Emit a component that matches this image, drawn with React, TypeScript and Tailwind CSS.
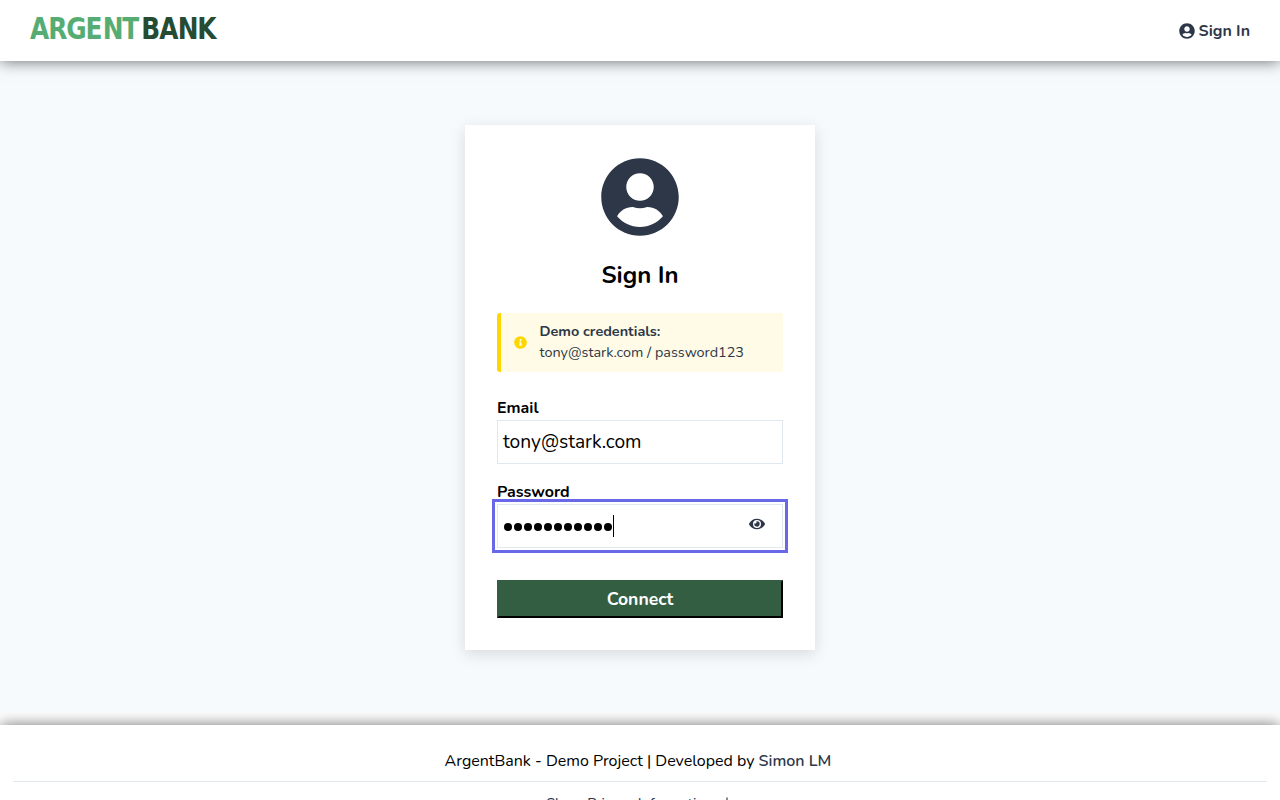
import { FaUserCircle, FaInfoCircle, FaEye } from "react-icons/fa";
import { ArrowDown } from "lucide-react";

export default function App() {
  return (
    <div className="flex h-[800px] flex-col overflow-hidden bg-white font-['Nunito','Noto_Sans',sans-serif] text-black">
      <header className="relative z-20 flex h-[61px] shrink-0 items-center justify-between bg-white px-[30px] shadow-[0_0_15px_rgba(0,0,0,0.6)]">
        <svg width="190" height="28" viewBox="0 0 190 28" className="-mt-[5px]" role="img" aria-label="Argent Bank">
          <text
            transform="scale(0.84 1)"
            y="24.5"
            x="0 21.6 43.2 66 86.6 109.8 132.4 154 175.8 199"
            fontFamily="DejaVu Sans"
            fontWeight="700"
            fontSize="29.6"
            fill="#56ad73"
          >
            ARGENT<tspan fill="#254c33">BANK</tspan>
          </text>
        </svg>
        <a className="flex items-center gap-1 text-base font-bold text-[#2d3748]">
          <FaUserCircle />
          <span>Sign In</span>
        </a>
      </header>

      <main className="relative z-10 flex h-[652px] shrink-0 flex-col items-center bg-[#f6fafd] pt-16">
        <section className="flex h-[525px] w-[350px] flex-col items-center bg-white p-8 shadow-[0_4px_15px_rgba(0,0,0,0.13)]">
          <FaUserCircle className="size-20 text-[#2d3748]" />
          <h1 className="mt-[22px] text-[24px] leading-8 font-bold">Sign In</h1>
          <div className="mt-[22px] flex h-[59px] w-full items-center rounded-[3px] border-l-4 border-[#ffd700] bg-[#fffbe6] pl-[13px] text-[#2d3748]">
            <FaInfoCircle className="size-[13px] text-[#ffd700]" />
            <p className="mb-[2px] ml-[12.5px] text-[14.4px] leading-[21px]">
              <strong className="block">Demo credentials:</strong>
              <span className="block">tony@stark.com / password123</span>
            </p>
          </div>
          <label className="mt-6 h-6 w-full text-base leading-6 font-bold">Email</label>
          <div className="flex h-11 w-full items-center border border-[#e2e8f0] px-[5px] text-[19.2px]">
            <span>tony@stark.com</span>
          </div>
          <label className="mt-4 h-6 w-full text-base leading-6 font-bold">Password</label>
          <div className="flex h-11 w-full items-center border border-[#e2e8f0] pr-[17px] pl-[6px] outline-3 outline-offset-2 outline-[#6868e8]">
            <div className="mt-px flex gap-[2px]">
              {Array.from({ length: 11 }, (_, i) => (
                <span key={i} className="size-2 rounded-full bg-black" />
              ))}
            </div>
            <span className="ml-px h-[22px] w-px bg-black" />
            <FaEye className="mb-1 ml-auto size-4 text-[#2d3748]" />
          </div>
          <button className="mt-8 h-[38px] w-full border-2 border-t-[#335e42] border-r-black border-b-black border-l-[#335e42] bg-[#335e42] text-[17.6px] leading-6 font-bold text-white">
            Connect
          </button>
        </section>
      </main>

      <footer className="mt-3 flex h-[75px] shrink-0 flex-col bg-white px-[13px] text-center shadow-[0_0_15px_rgba(0,0,0,0.55)]">
        <p className="mt-6 h-8 text-base leading-6">
          ArgentBank - Demo Project | Developed by <span className="mr-1 font-semibold text-[#2d3748]">Simon LM</span>
        </p>
        <div className="mt-2 flex justify-center border-t border-[#e2e8f0] pt-[9px] text-[14.4px] leading-6 font-medium text-[#2d3748]">
          <span>Show Privacy Information</span>
          <ArrowDown className="mt-1 ml-[7px] size-[14px]" />
        </div>
      </footer>
    </div>
  );
}
